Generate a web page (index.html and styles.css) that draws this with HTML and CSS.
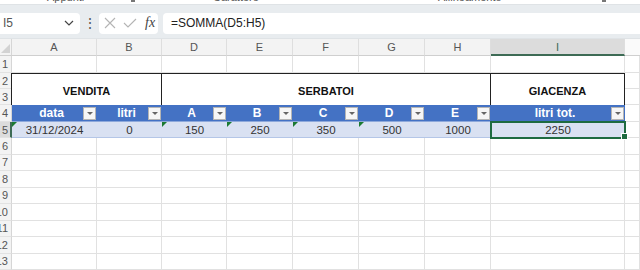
FILE: index.html
```html
<!DOCTYPE html>
<html lang="it">

<head>
    <meta charset="UTF-8">
    <title>SOMMA serbatoi</title>
    <link rel="stylesheet" href="styles.css">
</head>

<body>
    <div class="ribbon">
        <span class="group-label g1">Appunti</span>
        <span class="launcher l1"></span>
        <span class="group-label g2">Carattere</span>
        <span class="group-label g3">Allineamento</span>
        <span class="launcher l2"></span>
    </div>

    <div class="formula-bar">
        <div class="name-box">
            <span class="cell-ref">I5</span>
            <svg class="chevron" width="10" height="6" viewBox="0 0 10 6">
                <path d="M1 1 L5 5 L9 1" fill="none" stroke="#444" stroke-width="1.2" />
            </svg>
        </div>
        <div class="dots">&#8942;</div>
        <div class="fx-box">
            <svg width="12" height="12" viewBox="0 0 12 12">
                <path d="M1 1 L11 11 M11 1 L1 11" stroke="#b4b4b4" stroke-width="1.1" />
            </svg>
            <svg width="14" height="12" viewBox="0 0 14 12">
                <path d="M1 6 L5 10 L13 2" fill="none" stroke="#b4b4b4" stroke-width="1.1" />
            </svg>
            <span class="fx">fx</span>
        </div>
        <div class="formula">=SOMMA(D5:H5)</div>
    </div>

    <div class="sheet">
        <!-- intestazioni colonne -->
        <div class="corner"><span class="select-all"></span></div>
        <div class="col-head">A</div>
        <div class="col-head">B</div>
        <div class="col-head">D</div>
        <div class="col-head">E</div>
        <div class="col-head">F</div>
        <div class="col-head">G</div>
        <div class="col-head">H</div>
        <div class="col-head active">I</div>
        <div class="col-head last"></div>

        <!-- riga 1 -->
        <div class="row-head"><span>1</span></div>
        <div class="cell"></div><div class="cell"></div><div class="cell"></div><div class="cell"></div>
        <div class="cell"></div><div class="cell"></div><div class="cell"></div><div class="cell"></div>
        <div class="cell"></div>

        <!-- righe 2-3 -->
        <div class="row-head r2"><span>2</span></div>
        <div class="row-head r3"><span>3</span></div>
        <div class="title vendita">VENDITA</div>
        <div class="title serbatoi">SERBATOI</div>
        <div class="title giacenza">GIACENZA</div>
        <div class="cell c-last r2"></div>
        <div class="cell c-last r3"></div>

        <!-- riga 4 -->
        <div class="row-head"><span>4</span></div>
        <div class="th">data<span class="filter"></span></div>
        <div class="th">litri<span class="filter"></span></div>
        <div class="th">A<span class="filter"></span></div>
        <div class="th">B<span class="filter"></span></div>
        <div class="th">C<span class="filter"></span></div>
        <div class="th">D<span class="filter"></span></div>
        <div class="th">E<span class="filter"></span></div>
        <div class="th">litri tot.<span class="filter"></span></div>
        <div class="cell"></div>

        <!-- riga 5 -->
        <div class="row-head selected"><span>5</span></div>
        <div class="td warn">31/12/2024</div>
        <div class="td">0</div>
        <div class="td warn">150</div>
        <div class="td warn">250</div>
        <div class="td warn">350</div>
        <div class="td warn">500</div>
        <div class="td">1000</div>
        <div class="td current">2250<span class="handle"></span></div>
        <div class="cell"></div>
    </div>

    <div class="sheet empty" id="empty"></div>

    <script>
        var empty = document.getElementById("empty");
        var html = "";
        for (var r = 6; r <= 13; r++) {
            html += '<div class="row-head"><span>' + r + '</span></div>';
            for (var c = 0; c < 9; c++) {
                html += '<div class="cell"></div>';
            }
        }
        empty.innerHTML = html;
    </script>
</body>

</html>
```

FILE: styles.css
```css
body {
    margin: 0;
    padding: 0;
    width: 640px;
    height: 270px;
    overflow: hidden;
    background-color: #fff;
    font-family: "Liberation Sans", Arial, sans-serif;
    color: #222;
}

/* barra multifunzione (solo il bordo inferiore) */
.ribbon {
    height: 4px;
    overflow: hidden;
    background-color: #fff;
    position: relative;
}

.group-label {
    position: absolute;
    top: -9px;
    font-size: 11px;
    line-height: 12px;
    color: #555;
}

.g1 { left: 47px; }
.g2 { left: 213px; }
.g3 { left: 438px; }

.launcher {
    position: absolute;
    top: 0;
    width: 4px;
    height: 2px;
    background-color: #777;
}

.l1 { left: 131px; }
.l2 { left: 602px; }

.formula-bar {
    display: flex;
    align-items: center;
    height: 34px;
    box-sizing: border-box;
    padding: 8px 0 5px 0;
    background-color: #e8ecef;
    border-top: 1px solid #dfe3e6;
}

.name-box {
    width: 80px;
    height: 21px;
    box-sizing: border-box;
    background-color: #fff;
    border-radius: 0 4px 4px 0;
    display: flex;
    align-items: center;
    justify-content: space-between;
    padding: 0 6px 0 3px;
    font-size: 12px;
    color: #333;
}

.cell-ref {
    color: #555;
}

.dots {
    width: 19px;
    text-align: center;
    font-size: 14px;
    color: #555;
    line-height: 21px;
}

.fx-box {
    width: 59px;
    height: 21px;
    box-sizing: border-box;
    background-color: #fff;
    border-radius: 4px;
    display: flex;
    align-items: center;
    gap: 7px;
    padding-left: 5px;
}

.fx {
    font-family: "Liberation Serif", serif;
    font-style: italic;
    font-size: 14px;
    color: #444;
    margin-left: 1px;
}

.formula {
    flex: 1;
    height: 21px;
    box-sizing: border-box;
    margin-left: 5px;
    background-color: #fff;
    border-radius: 4px 0 0 4px;
    padding-left: 8px;
    font-size: 12px;
    line-height: 21px;
    color: #222;
}

/* foglio */
.sheet {
    display: grid;
    grid-template-columns: 12px 85px 65px 65px 66px 66px 66px 66px 134px 1fr;
    grid-template-rows: 17px 17px 16px 16px 17px 16px;
    font-size: 11px;
    border-top: 1px solid #dfe3e6;
}

.sheet.empty {
    grid-template-rows: repeat(8, 16.5px);
    border-top: none;
}

.corner {
    background-color: #f3f3f3;
    border-right: 1px solid #d6d6d6;
    border-bottom: 1px solid #cfcfcf;
    position: relative;
}

.select-all {
    position: absolute;
    right: 1px;
    bottom: 2px;
    width: 0;
    height: 0;
    border-left: 9px solid transparent;
    border-bottom: 9px solid #d2d2d2;
}

.col-head {
    background-color: #f3f3f3;
    border-right: 1px solid #dedede;
    border-bottom: 1px solid #cfcfcf;
    color: #555;
    text-align: center;
    line-height: 16px;
}

.col-head.active {
    background-color: #dcdcdc;
    border-bottom: 2px solid #3d6b55;
    color: #3d6b55;
}

.col-head.last {
    background-color: #fafafa;
    border-right: none;
}

.row-head {
    background-color: #f3f3f3;
    border-right: 1px solid #d6d6d6;
    border-bottom: 1px solid #e2e2e2;
    box-sizing: border-box;
    display: flex;
    justify-content: flex-end;
    align-items: center;
    overflow: hidden;
    color: #555;
    padding-right: 3px;
}

.row-head.r2 { grid-column: 1; grid-row: 3; }
.row-head.r3 { grid-column: 1; grid-row: 4; }

.row-head.selected {
    background-color: #dcdcdc;
    border-right: 2px solid #3d6b55;
    padding-right: 2px;
}

.cell {
    border-right: 1px solid #e1e1e1;
    border-bottom: 1px solid #e1e1e1;
}

.cell.c-last { grid-column: 10; }
.cell.r2 { grid-row: 3; }
.cell.r3 { grid-row: 4; }

.title {
    grid-row: 3 / 5;
    display: flex;
    align-items: center;
    justify-content: center;
    font-weight: bold;
    color: #111;
    border-top: 1px solid #222;
    border-right: 1px solid #222;
    padding-top: 2px;
}

.vendita {
    grid-column: 2 / 4;
    border-left: 1px solid #222;
    margin-left: -1px;
}

.serbatoi { grid-column: 4 / 9; }
.giacenza { grid-column: 9 / 10; }

.th {
    background-color: #4472c4;
    color: #fff;
    font-weight: bold;
    font-size: 12px;
    display: flex;
    align-items: center;
    justify-content: center;
    position: relative;
    padding-right: 6px;
    border-bottom: 1px solid #8ea9db;
}

.filter {
    position: absolute;
    right: 1px;
    top: 2px;
    width: 11px;
    height: 11px;
    background-color: #f6f6f6;
    border: 1px solid #b5b5b5;
}

.filter::after {
    content: "";
    position: absolute;
    left: 3px;
    top: 4px;
    border-left: 3px solid transparent;
    border-right: 3px solid transparent;
    border-top: 3px solid #666;
}

.td {
    background-color: #d9e1f2;
    color: #333;
    font-size: 11.5px;
    display: flex;
    align-items: center;
    justify-content: center;
    position: relative;
    border-bottom: 1px solid #b4c6e7;
}

.warn::before {
    content: "";
    position: absolute;
    left: 0;
    top: 0;
    border-top: 5px solid #1b7a32;
    border-right: 5px solid transparent;
}

.td.current {
    outline: 2px solid #1e6b41;
    outline-offset: -1px;
}

.handle {
    position: absolute;
    right: -3px;
    bottom: -3px;
    width: 5px;
    height: 5px;
    background-color: #1e6b41;
    border: 1px solid #fff;
}
```
